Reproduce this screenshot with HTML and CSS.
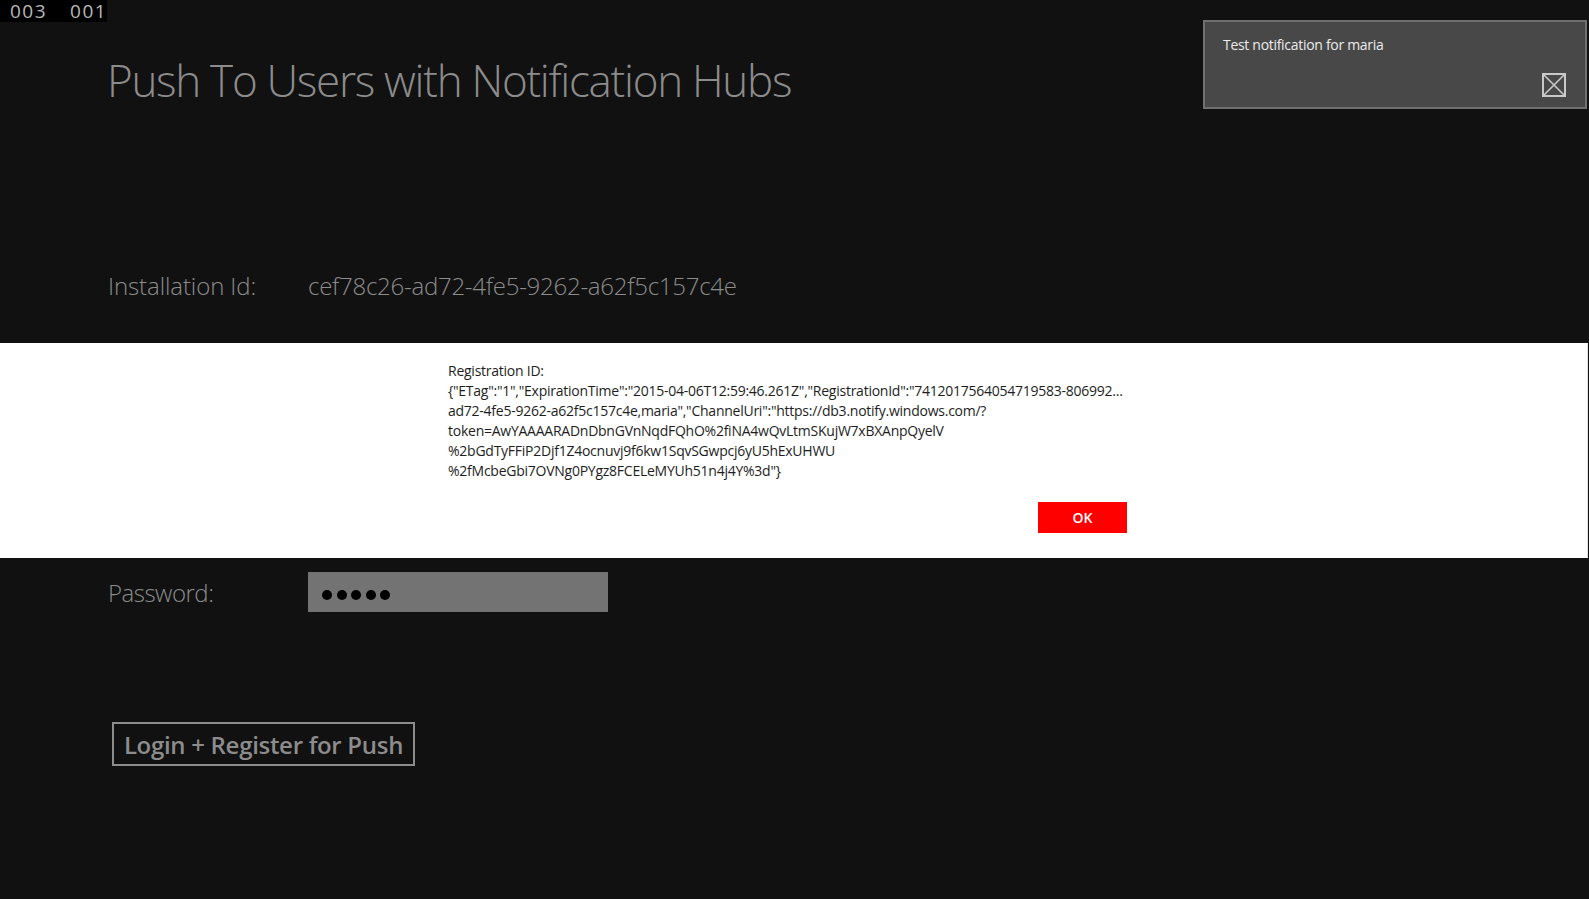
FILE: index.html
```html
<!DOCTYPE html>
<html lang="en">
<head>
<meta charset="utf-8">
<title>Push To Users with Notification Hubs</title>
<link rel="stylesheet" href="styles.css">
</head>
<body>
<div class="counter"><span>003</span><span>001</span></div>

<div class="toast">
  <div class="toast-text">Test notification for maria</div>
  <div class="toast-close">
    <svg width="24" height="24" viewBox="0 0 24 24"><rect x="1" y="1" width="22" height="22" fill="none" stroke="#c9c9c9" stroke-width="2"/><path d="M1 1L23 23M23 1L1 23" stroke="#c9c9c9" stroke-width="1.6" fill="none"/></svg>
  </div>
</div>

<main class="page">
  <h1 class="title">Push To Users with Notification Hubs</h1>

  <div class="row install-row">
    <div class="label">Installation Id:</div>
    <div class="value">cef78c26-ad72-4fe5-9262-a62f5c157c4e</div>
  </div>

  <section class="dialog">
    <div class="dialog-inner">
      <div class="dialog-text">
        <div class="line">Registration ID:</div>
        <div class="line">{"ETag":"1","ExpirationTime":"2015-04-06T12:59:46.261Z","RegistrationId":"7412017564054719583-806992...</div>
        <div class="line">ad72-4fe5-9262-a62f5c157c4e,maria","ChannelUri":"https://db3.notify.windows.com/?</div>
        <div class="line">token=AwYAAAARADnDbnGVnNqdFQhO%2fiNA4wQvLtmSKujW7xBXAnpQyelV</div>
        <div class="line">%2bGdTyFFiP2Djf1Z4ocnuvj9f6kw1SqvSGwpcj6yU5hExUHWU</div>
        <div class="line">%2fMcbeGbi7OVNg0PYgz8FCELeMYUh51n4j4Y%3d"}</div>
      </div>
      <div class="dialog-actions">
        <button class="ok-btn">OK</button>
      </div>
    </div>
  </section>

  <div class="row pw-row">
    <div class="label pw-label">Password:</div>
    <div class="pw-box"><span class="dot"></span><span class="dot"></span><span class="dot"></span><span class="dot"></span><span class="dot"></span></div>
  </div>

  <button class="login-btn">Login + Register for Push</button>
</main>
</body>
</html>
```

FILE: styles.css
```css
html, body {
  margin: 0;
  padding: 0;
  background: #111111;
  height: 100%;
  overflow: hidden;
}
body {
  font-family: "Open Sans", "Noto Sans", sans-serif;
  color: #8c8c8c;
  position: relative;
}

.counter {
  position: absolute;
  top: 0;
  left: 0;
  width: 107px;
  height: 22px;
  background: #000;
  color: #b8b8b8;
  font-size: 19px;
  line-height: 22px;
  display: flex;
  gap: 23px;
  padding-left: 10px;
  box-sizing: border-box;
  letter-spacing: 1.5px;
}

.toast {
  position: absolute;
  top: 20px;
  left: 1203px;
  width: 384px;
  height: 89px;
  box-sizing: border-box;
  background: #484848;
  border: 2px solid #707070;
  display: flex;
  flex-direction: column;
  padding: 13px 20px 10px 18px;
}
.toast-text {
  color: #ececec;
  font-size: 14px;
  line-height: 20px;
  letter-spacing: -0.3px;
}
.toast-close {
  margin-top: auto;
  align-self: flex-end;
  width: 24px;
  height: 24px;
  margin-right: -1px;
}
.toast-close svg { display: block; }

.page {
  display: flex;
  flex-direction: column;
}

.title {
  margin: 51px 0 0 107px;
  font-weight: 300;
  font-size: 44px;
  line-height: 58px;
  letter-spacing: -1.3px;
  color: #8c8c8c;
}

.row {
  display: flex;
  align-items: center;
  padding-left: 108px;
}
.label {
  width: 200px;
  font-size: 24px;
  font-weight: 300;
  letter-spacing: -0.1px;
}
.pw-label {
  letter-spacing: -0.5px;
}
.value {
  font-size: 24px;
  font-weight: 300;
  letter-spacing: -0.25px;
}
.install-row {
  margin-top: 160px;
  height: 32px;
}

.dialog {
  margin-top: 42px;
  background: #ffffff;
  height: 215px;
  width: 1588px;
  border-right: 1px solid #e4e4e4;
  box-sizing: border-box;
}
.dialog-inner {
  width: 679px;
  margin-left: 448px;
  padding-top: 18px;
  display: flex;
  flex-direction: column;
}
.dialog-text {
  color: #1e1e1e;
  font-size: 14px;
  line-height: 20.1px;
  letter-spacing: -0.25px;
  white-space: nowrap;
}
.dialog-actions {
  display: flex;
  justify-content: flex-end;
  margin-top: 20px;
}
.ok-btn {
  width: 89px;
  height: 31px;
  border: none;
  background: #ff0000;
  color: #ffffff;
  font-family: "Open Sans", sans-serif;
  font-weight: 600;
  font-size: 14px;
  padding: 0;
}

.pw-row {
  margin-top: 14px;
  height: 40px;
}
.pw-box {
  width: 300px;
  height: 40px;
  background: #737373;
  display: flex;
  align-items: center;
  gap: 4.5px;
  padding: 6px 0 0 14px;
  box-sizing: border-box;
}
.dot {
  width: 10px;
  height: 10px;
  border-radius: 50%;
  background: #000;
}

.login-btn {
  margin: 110px 0 0 112px;
  align-self: flex-start;
  width: 303px;
  height: 44px;
  background: transparent;
  border: 2px solid #8c8c8c;
  color: #8c8c8c;
  font-family: "Open Sans", sans-serif;
  font-weight: 600;
  font-size: 24px;
  letter-spacing: -0.3px;
  padding: 0;
}
```
